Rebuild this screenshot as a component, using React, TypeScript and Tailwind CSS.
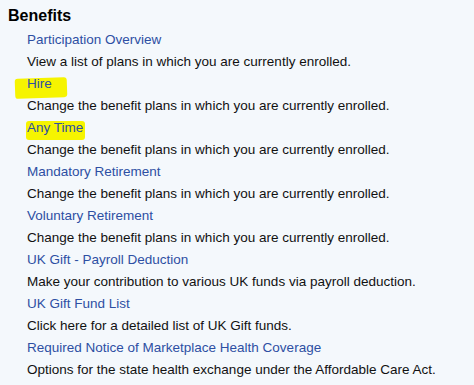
const items = [
  { title: "Participation Overview", text: "View a list of plans in which you are currently enrolled." },
  { title: "Hire", text: "Change the benefit plans in which you are currently enrolled.", mark: "hire" },
  { title: "Any Time", text: "Change the benefit plans in which you are currently enrolled.", mark: "any" },
  { title: "Mandatory Retirement", text: "Change the benefit plans in which you are currently enrolled." },
  { title: "Voluntary Retirement", text: "Change the benefit plans in which you are currently enrolled." },
  { title: "UK Gift - Payroll Deduction", text: "Make your contribution to various UK funds via payroll deduction." },
  { title: "UK Gift Fund List", text: "Click here for a detailed list of UK Gift funds." },
  { title: "Required Notice of Marketplace Health Coverage", text: "Options for the state health exchange under the Affordable Care Act." },
];

export default function App() {
  return (
    <div className="h-[385px] w-[474px] overflow-hidden bg-[#f4f8fc] font-['Liberation_Sans',Arial,sans-serif] text-[13.5px] text-[#111]">
      <h2 className="pl-[8px] pt-[4px] text-[16px] font-bold leading-[23px] text-black">Benefits</h2>
      <ul className="mt-[2px] pl-[27px] leading-[22px]">
        {items.map((item) => (
          <li key={item.title}>
            <div className="relative">
              {item.mark === "hire" && (
                <span className="absolute left-[-12px] top-[5px] h-[20px] w-[52px] -rotate-2 rounded-[3px] bg-[#f6f400]" />
              )}
              {item.mark === "any" && (
                <span className="absolute left-[-1px] top-[4px] h-[19px] w-[59px] rounded-[3px] bg-[#f6f400]" />
              )}
              <a href="#" className="relative text-[#2d4fa3]">
                {item.title}
              </a>
            </div>
            <p>{item.text}</p>
          </li>
        ))}
      </ul>
    </div>
  );
}
